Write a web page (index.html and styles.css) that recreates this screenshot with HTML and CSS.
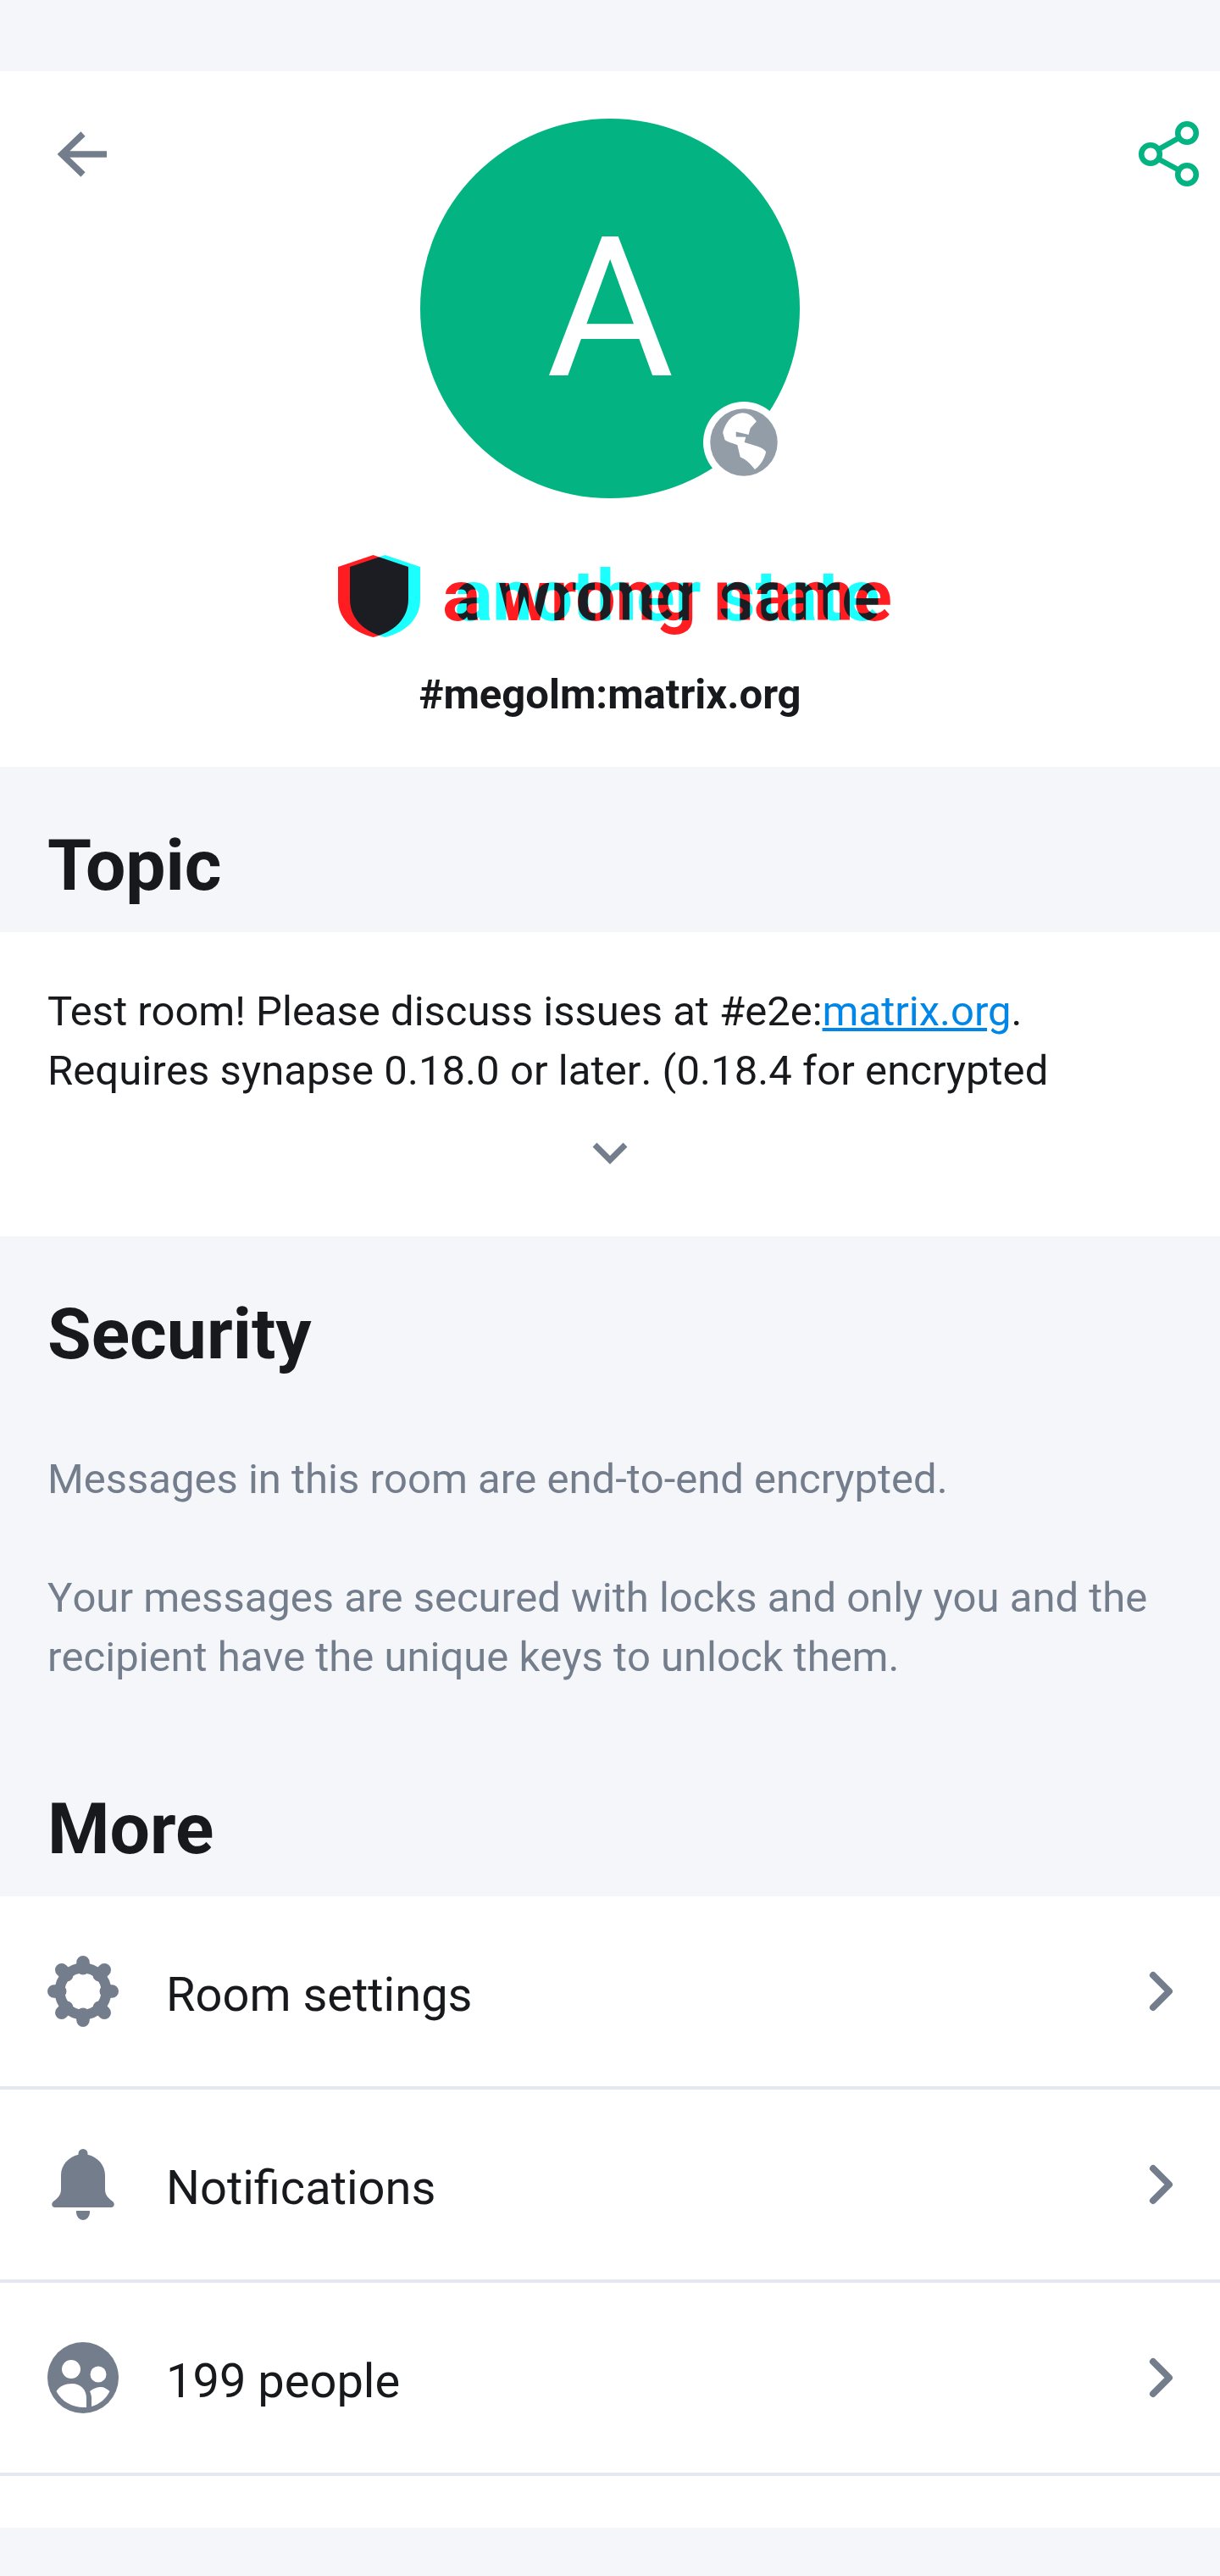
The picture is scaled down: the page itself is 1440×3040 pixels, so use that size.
FILE: index.html
```html
<!DOCTYPE html>
<html lang="en">
<head>
<meta charset="utf-8">
<title>Room details</title>
<link rel="stylesheet" href="styles.css">
</head>
<body>
<div class="page">
  <header class="head">
    <div class="head-top">
      <svg class="icon back" viewBox="0 0 84 84"><path d="M70 26H20M42 2 17 26l25 24" transform="translate(0 16)" fill="none" stroke="#737d8c" stroke-width="7.5"/></svg>
      <div class="avatar">
        <span class="avatar-letter">A</span>
        <svg class="globe" viewBox="148 100 290 290">
          <circle cx="293" cy="245" r="145" fill="#fff"/>
          <circle cx="293" cy="245" r="120" fill="#929da8"/>
          <path d="M338 170C322 148 305 140 288 140C262 142 232 160 218 210L225 236C240 248 258 248 270 255L280 297C295 305 308 310 332 342C348 330 364 312 372 280C365 265 345 260 295 245L300 226L265 225L265 207L310 218L316 195Z" fill="#fff"/>
        </svg>
      </div>
      <svg class="icon share" viewBox="0 0 84 84"><g fill="none" stroke="#03b381" stroke-width="6.5"><circle cx="63" cy="17" r="10.8"/><circle cx="20" cy="42" r="10.8"/><circle cx="63" cy="66" r="10.8"/><path d="m29 36.500 25-14M29 47.500l25 13.500"/></g></svg>
    </div>
    <div class="title">
      <div class="title-layer layer-red">
        <svg class="shield" viewBox="0 0 83 97"><path d="M41.500 0 83 14V52C83 75 66 91 41.500 97 17 91 0 75 0 52V14Z" fill="#ff1d22"/></svg>
        <span class="title-text">a wrong name</span>
      </div>
      <div class="title-layer layer-cyan">
        <svg class="shield" viewBox="0 0 83 97"><path d="M41.500 0 83 14V52C83 75 66 91 41.500 97 17 91 0 75 0 52V14Z" fill="#1bffff"/></svg>
        <span class="title-text">another state</span>
      </div>
    </div>
    <p class="alias">#megolm:matrix.org</p>
  </header>

  <h2 class="sec-title sec-topic">Topic</h2>
  <section class="topic">
    <p class="topic-text">Test room! Please discuss issues at #e2e:<a class="link" href="#">matrix.org</a>.<br><span class="topic-line">Requires synapse 0.18.0 or later. (0.18.4 for encrypted</span></p>
    <svg class="expand" viewBox="0 0 42 26"><path d="M3 3l18 18L39 3" fill="none" stroke="#737d8c" stroke-width="7"/></svg>
  </section>

  <section class="info">
    <h2 class="sec-title sec-security">Security</h2>
    <p class="info-text first">Messages in this room are end-to-end encrypted.</p>
    <p class="info-text">Your messages are secured with locks and only you and the recipient have the unique keys to unlock them.</p>
    <h2 class="sec-title sec-more">More</h2>
  </section>

  <ul class="rows">
    <li class="row">
      <svg class="icon" viewBox="0 0 84 84"><g fill="none" stroke="#737d8c"><circle cx="42" cy="42" r="27.500" stroke-width="12"/><g stroke-width="15.500" stroke-linecap="round"><path d="M42 7.750v7M42 69.250v7M7.750 42h7M69.250 42h7M16.750 16.750l6 6M61.250 61.250l6 6M16.750 67.250l6-6M61.250 22.750l6-6"/></g></g></svg>
      <span class="row-label">Room settings</span>
      <svg class="chev" viewBox="0 0 34 50"><path d="M6 6l19 19L6 44" fill="none" stroke="#737d8c" stroke-width="8" stroke-linecap="round" stroke-linejoin="round"/></svg>
    </li>
    <li class="row">
      <svg class="icon" viewBox="0 0 84 84"><path fill="#737d8c" d="M42 0a5.500 5.500 0 0 1 5.500 5.500v1.300C59 9.500 68 19 68 31V48C68 55 73 59 77 62C80 64.500 79 69 75 69H9C5 69 4 64.500 7 62C11 59 16 55 16 48V31C16 19 25 9.500 36.500 6.800V5.500A5.500 5.500 0 0 1 42 0ZM34 73H50V75A8 9 0 0 1 34 75Z"/></svg>
      <span class="row-label">Notifications</span>
      <svg class="chev" viewBox="0 0 34 50"><path d="M6 6l19 19L6 44" fill="none" stroke="#737d8c" stroke-width="8" stroke-linecap="round" stroke-linejoin="round"/></svg>
    </li>
    <li class="row">
      <svg class="icon" viewBox="0 0 84 84"><circle cx="42" cy="42" r="42" fill="#737d8c"/><g fill="#fff"><circle cx="28" cy="32" r="11"/><circle cx="60" cy="38" r="9.500"/><path d="M10.500 58C14 52 21 49 29 49C39 49 46 56 46 66V77C31 78 17 71 10.500 58Z"/><path d="M50 58C55 54 60 53 63 53C67 53 70 55 73.500 58C69 67 62 73 52 76V66C52 63 51 60 50 58Z"/></g></svg>
      <span class="row-label">199 people</span>
      <svg class="chev" viewBox="0 0 34 50"><path d="M6 6l19 19L6 44" fill="none" stroke="#737d8c" stroke-width="8" stroke-linecap="round" stroke-linejoin="round"/></svg>
    </li>
  </ul>
</div>
</body>
</html>
```
FILE: styles.css
```css
* { box-sizing: border-box; }
html, body { margin: 0; padding: 0; }
body { background: #f4f6fa; color: #17191c; font-family: Roboto, "Noto Sans", sans-serif; }
.page { width: 1440px; height: 3040px; overflow: hidden; padding-top: 84px; }
.head { background: #fff; height: 821px; padding-top: 56px; }
.head-top { display: grid; grid-template-columns: 1fr 448px 1fr; align-items: start; }
.icon { width: 84px; height: 84px; display: block; flex: none; }
.back { margin-left: 56px; }
.share { justify-self: end; margin-right: 18px; }
.avatar { width: 448px; height: 448px; border-radius: 50%; background: #03b381; color: #fff; position: relative; display: flex; align-items: center; justify-content: center; }
.avatar-letter { font-size: 231px; font-weight: 400; line-height: 1; }
.globe { position: absolute; left: 334px; top: 334px; width: 96px; height: 96px; }
.title { display: grid; margin-top: 67px; height: 97px; }
.title-layer { grid-area: 1 / 1; display: flex; align-items: center; justify-content: center; gap: 40px; padding-left: 12px; mix-blend-mode: multiply; }
.shield { width: 83px; height: 97px; flex: none; }
.title-text { font-size: 84px; font-weight: 700; line-height: 97px; white-space: nowrap; }
.layer-red { color: #ff1d22; }
.layer-cyan { color: #1bffff; }
.alias { margin: 38px 0 0; text-align: center; font-size: 49px; font-weight: 700; line-height: 60px; }
.sec-title { margin: 0; font-size: 84px; font-weight: 700; line-height: 100px; }
.sec-topic { height: 195px; padding: 67px 56px 0; }
.topic { background: #fff; height: 359px; padding: 59px 56px 0; }
.topic-text { margin: 0; font-size: 49px; line-height: 70px; }
.topic-line { font-kerning: none; letter-spacing: 0.07px; }
.link { color: #0086e6; }
.expand { display: block; width: 42px; height: 26px; margin: 49px auto 0; }
.info { height: 779px; padding: 66px 56px 0; }
.info-text { margin: 0; font-size: 49px; line-height: 70px; color: #737d8c; font-kerning: none; }
.info-text.first { margin: 86px 0 70px; }
.sec-more { margin-top: 118px; }
.rows { list-style: none; margin: 0; padding: 0 0 61px; background: #fff; }
.row { height: 228px; display: flex; align-items: center; padding: 0 51px 0 56px; border-bottom: 4px solid #e3e8f0; }
.row-label { margin-left: 56px; padding-top: 8px; flex: 1; font-size: 56px; line-height: 70px; }
.chev { width: 34px; height: 50px; flex: none; }
```
